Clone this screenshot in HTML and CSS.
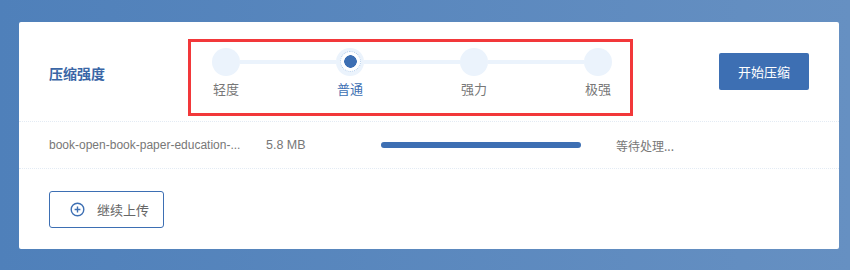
FILE: index.html
```html
<!DOCTYPE html>
<html lang="zh-CN">

<head>
    <meta charset="UTF-8">
    <meta name="viewport" content="width=device-width, initial-scale=1.0">
    <title>压缩</title>
    <link rel="stylesheet" href="styles.css">
</head>

<body>
    <div class="card">
        <div class="level-row">
            <span class="level-title">压缩强度</span>
            <div class="level-box">
                <div class="steps">
                    <span class="dot"></span>
                    <span class="line"></span>
                    <span class="dot active"><i></i></span>
                    <span class="line"></span>
                    <span class="dot"></span>
                    <span class="line"></span>
                    <span class="dot"></span>

                    <span class="step-label c1">轻度</span>
                    <span class="step-label c3 on">普通</span>
                    <span class="step-label c5">强力</span>
                    <span class="step-label c7">极强</span>
                </div>
            </div>
            <button class="start-btn">开始压缩</button>
        </div>

        <div class="file-row">
            <span class="file-name">book-open-book-paper-education-...</span>
            <span class="file-size">5.8 MB</span>
            <div class="progress"><div class="progress-fill" style="width: 100%"></div></div>
            <span class="file-status">等待处理...</span>
        </div>

        <div class="upload-row">
            <button class="more-btn">
                <svg width="15" height="15" viewBox="0 0 15 15">
                    <circle cx="7.5" cy="7.5" r="6.3" fill="none" stroke="#3d6fb3" stroke-width="1.4" />
                    <path d="M7.5 4.6v5.8M4.6 7.5h5.8" stroke="#3d6fb3" stroke-width="1.4" />
                </svg>
                继续上传
            </button>
        </div>
    </div>
</body>

</html>
```

FILE: styles.css
```css
* {
    box-sizing: border-box;
}

body {
    margin: 0;
    padding: 22px 11px 21px 19px;
    height: 270px;
    font-family: "Noto Sans CJK SC", "Liberation Sans", sans-serif;
    background: linear-gradient(90deg, #4f80ba, #6690c2);
}

.card {
    width: 820px;
    height: 227px;
    background-color: #fff;
    border-radius: 2px;
}

/* first row: level slider */
.level-row {
    height: 100px;
    display: flex;
    align-items: center;
    padding: 0 30px;
    border-bottom: 1px dotted #e3ebf4;
}

.level-title {
    width: 139px;
    font-size: 14px;
    font-weight: 600;
    color: #3a66a6;
    margin-top: 2px;
}

.level-box {
    width: 445px;
    height: 77px;
    margin-top: 11px;
    border: 3px solid #f2383a;
    padding: 6px 18px 0 21px;
}

.steps {
    display: grid;
    grid-template-columns: 28px 1fr 28px 1fr 28px 1fr 28px;
    grid-template-rows: 28px auto;
    row-gap: 3px;
}

.dot {
    width: 28px;
    height: 28px;
    border-radius: 50%;
    background-color: #ebf3fc;
    display: flex;
    align-items: center;
    justify-content: center;
}

.dot.active i {
    width: 21px;
    height: 21px;
    border-radius: 50%;
    border: 1px dotted #a9c8ea;
    background: radial-gradient(circle, #3d6fb3 0, #3d6fb3 6px, #fff 6.5px, #fff 10px);
}

.line {
    height: 4px;
    align-self: center;
    margin-top: 1px;
    background-color: #ebf3fc;
}

.step-label {
    grid-row: 2;
    justify-self: center;
    white-space: nowrap;
    font-size: 13px;
    color: #777;
}

.step-label.on {
    color: #3d6fb3;
}

.c1 { grid-column: 1; }
.c3 { grid-column: 3; }
.c5 { grid-column: 5; }
.c7 { grid-column: 7; }

.start-btn {
    margin-left: auto;
    width: 90px;
    height: 37px;
    border: none;
    border-radius: 2px;
    background-color: #3d6fb3;
    color: #fff;
    font-family: inherit;
    font-size: 13px;
}

/* file row */
.file-row {
    height: 47px;
    display: flex;
    align-items: center;
    padding: 0 30px;
    border-bottom: 1px dotted #e3ebf4;
    font-size: 12px;
    color: #777;
}

.file-name {
    width: 217px;
    white-space: nowrap;
    font-family: "Liberation Sans", sans-serif;
}

.file-size {
    width: 115px;
    font-size: 12.5px;
    font-family: "Liberation Sans", sans-serif;
}

.progress {
    width: 200px;
    height: 6px;
    border-radius: 3px;
    background-color: #ebf3fc;
    margin-right: 35px;
}

.progress-fill {
    height: 100%;
    border-radius: 3px;
    background-color: #3d6fb3;
}

.file-status {
    font-size: 12px;
}

/* upload more */
.upload-row {
    padding: 22px 30px 0;
}

.more-btn {
    width: 115px;
    height: 37px;
    display: flex;
    align-items: center;
    gap: 12px;
    padding: 0 0 0 20px;
    background-color: #fff;
    border: 1px solid #3d6fb3;
    border-radius: 3px;
    font-family: inherit;
    font-size: 13px;
    color: #666;
}
```
